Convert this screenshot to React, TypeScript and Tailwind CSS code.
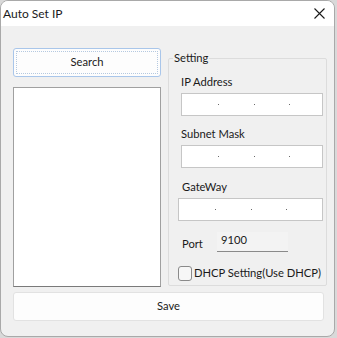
import React from 'react';

const font = { fontFamily: 'Lato, "Noto Sans", sans-serif' };

function IpField({ className = '' }: { className?: string }) {
  return (
    <div className={`flex h-[23px] items-center border border-[#c6c6c6] bg-white ${className}`}>
      <div className="w-[36px]" />
      <span className="h-[1px] w-[1px] bg-[#6a6a6a]" />
      <div className="w-[35px]" />
      <span className="h-[1px] w-[1px] bg-[#6a6a6a]" />
      <div className="w-[34px]" />
      <span className="h-[1px] w-[1px] bg-[#6a6a6a]" />
    </div>
  );
}

export default function App() {
  return (
    <div className="h-[338px] w-[337px] bg-[#d9d9d9] text-[11.2px] text-[#1a1a1a]" style={font}>
      <div className="flex h-[337px] w-[335px] flex-col overflow-hidden rounded-[8px] border border-[#a9a9a9] bg-[#f0f0f0]">
        {/* title bar */}
        <div className="flex h-[25px] shrink-0 items-center justify-between bg-white pl-[2px] pr-[8px]">
          <span className="text-[12px]">Auto Set IP</span>
          <svg width="11" height="11" viewBox="0 0 11 11" className="mr-[1px]">
            <path d="M0.5 0.5L10.5 10.5M10.5 0.5L0.5 10.5" stroke="#1a1a1a" strokeWidth="1.1" />
          </svg>
        </div>

        <div className="flex flex-1 flex-col pl-[12px] pr-[6px] pt-[22px]">
          <div className="flex gap-[7px]">
            {/* left column */}
            <div className="flex w-[148px] shrink-0 flex-col gap-[10px]">
              <div className="flex h-[29px] items-center justify-center rounded-[3px] border border-[#a9c6ea] bg-[#fdfdfd] p-[2px]">
                <div className="flex h-full w-full items-center justify-center border border-dotted border-[#b5c9e0]">
                  Search
                </div>
              </div>
              <div className="h-[200px] border border-[#a0a0a0] border-b-[#7a7a7a] bg-white" />
            </div>

            {/* Setting group */}
            <fieldset className="mt-[3px] h-[235px] w-[159px] min-w-0 shrink-0 rounded-[2px] border border-[#dcdcdc] pl-[12px] pr-[3px]">
              <legend className="-ml-[8px] px-[1px] leading-[14px]">Setting</legend>
              <div className="flex flex-col">
                <span className="mt-[9px] leading-[16px]">IP Address</span>
                <IpField className="mt-[3px] w-[142px]" />
                <span className="mt-[10px] leading-[16px]">Subnet Mask</span>
                <IpField className="mt-[3px] w-[142px]" />
                <span className="mt-[11px] pl-[1px] leading-[16px]">GateWay</span>
                <IpField className="-ml-[3px] mt-[3px] h-[22px] w-[145px]" />
                <div className="mt-[11px] flex items-end pl-[1px]">
                  <span className="w-[35px] leading-[16px]">Port</span>
                  <div className="flex h-[20px] w-[71px] items-start border-b border-[#8a8a8a] bg-[#f3f3f3] pl-[4px]">
                    <span className="leading-[16px]">9100</span>
                  </div>
                </div>
                <label className="-ml-[3px] mt-[13px] flex items-center gap-[2px] whitespace-nowrap">
                  <span className="h-[15px] w-[14px] shrink-0 rounded-[3px] border border-[#8a8a8a] bg-[#f7f7f7]" />
                  <span className="leading-[16px]">DHCP Setting(Use DHCP)</span>
                </label>
              </div>
            </fieldset>
          </div>

          <div className="mt-[5px] flex h-[29px] w-[311px] items-center justify-center rounded-[3px] border border-[#e2e2e2] bg-[#fdfdfd]">
            Save
          </div>
        </div>
      </div>
    </div>
  );
}
